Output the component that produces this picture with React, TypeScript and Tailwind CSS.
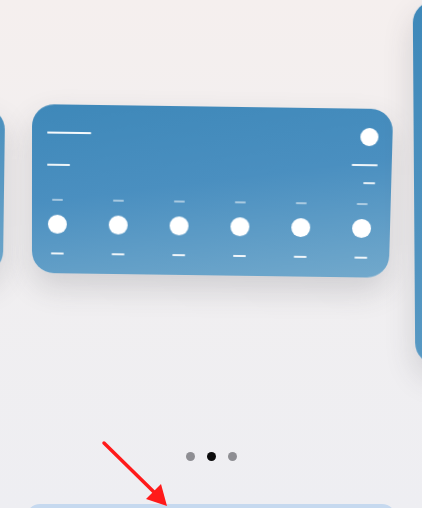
import React from "react";

const columns = [0, 1, 2, 3, 4, 5];

function Line({className}: {className: string}) {
    return <div className={`h-[2px] rounded-full ${className}`}/>;
}

function WeatherWidget() {
    return (
        <div
            className="flex h-[169px] w-[359px] shrink-0 flex-col rounded-[22px] bg-[linear-gradient(172deg,#3e88b9_0%,#4a8fc0_45%,#72a9cc_100%)] px-[14px] pt-[19px] shadow-[0_14px_30px_rgba(60,60,70,0.18)] [transform:perspective(700px)_rotateX(-3deg)_rotate(0.8deg)]">
            <div className="flex h-[75px] items-start justify-between">
                <div className="flex flex-col pl-[1px]">
                    <Line className="mt-[8px] w-[44px] bg-white/95"/>
                    <Line className="mt-[30px] w-[23px] bg-white/90"/>
                </div>
                <div className="flex flex-col items-end">
                    <div className="h-[18px] w-[18px] rounded-full bg-white"/>
                    <Line className="mt-[18px] w-[26px] bg-white/90"/>
                    <Line className="mr-[2px] mt-[16px] w-[12px] bg-white/85"/>
                </div>
            </div>
            <div className="flex justify-between pl-[1px] pr-[5px]">
                {columns.map((c) => (
                    <div key={c} className="flex w-[20px] flex-col items-center">
                        <Line className="w-[11px] bg-white/50"/>
                        <div className="mt-[14px] h-[19px] w-[19px] rounded-full bg-white"/>
                        <Line className="mt-[19px] w-[13px] bg-white/90"/>
                    </div>
                ))}
            </div>
        </div>
    );
}

export default function App() {
    return (
        <div
            className="relative flex h-[508px] w-full flex-col overflow-hidden bg-[linear-gradient(180deg,#f5efee_0%,#f1eff0_45%,#eeeef2_100%)] font-['Liberation_Sans',sans-serif]">
            <div className="flex h-[382px] shrink-0 items-center justify-center gap-[26px]">
                <div
                    className="h-[166px] w-[359px] shrink-0 rounded-[22px] bg-[linear-gradient(172deg,#3e88b9_0%,#6ea6ca_100%)] shadow-[0_14px_30px_rgba(60,60,70,0.18)] [transform:translateX(-2px)_perspective(700px)_rotateX(-3deg)]"/>
                <WeatherWidget/>
                <div
                    className="mt-[2px] h-[364px] w-[359px] shrink-0 self-start rounded-[22px] bg-[linear-gradient(175deg,#3e88b9_0%,#5a9ac4_100%)] shadow-[0_14px_30px_rgba(60,60,70,0.18)] [transform:translateX(-3px)_perspective(900px)_rotateX(-2deg)]"/>
            </div>

            <div className="mt-[70px] flex shrink-0 items-center justify-center gap-[12px]">
                <span className="h-[9px] w-[9px] rounded-full bg-[#8e8e93]"/>
                <span className="h-[9px] w-[9px] rounded-full bg-[#0b0b0c]"/>
                <span className="h-[9px] w-[9px] rounded-full bg-[#8e8e93]"/>
            </div>

            <div className="mx-[26px] mt-[43px] h-[50px] shrink-0 rounded-[14px] bg-[#c6d9ef]"/>

            {/* annotation arrow */}
            <svg className="pointer-events-none absolute left-0 top-0" width="422" height="508" viewBox="0 0 422 508">
                <line x1="104" y1="443" x2="157" y2="495" stroke="#ff1a1a" strokeWidth="3.5" strokeLinecap="round"/>
                <polygon points="167,506 146,499 161,484" fill="#ff1a1a"/>
            </svg>
        </div>
    );
}
